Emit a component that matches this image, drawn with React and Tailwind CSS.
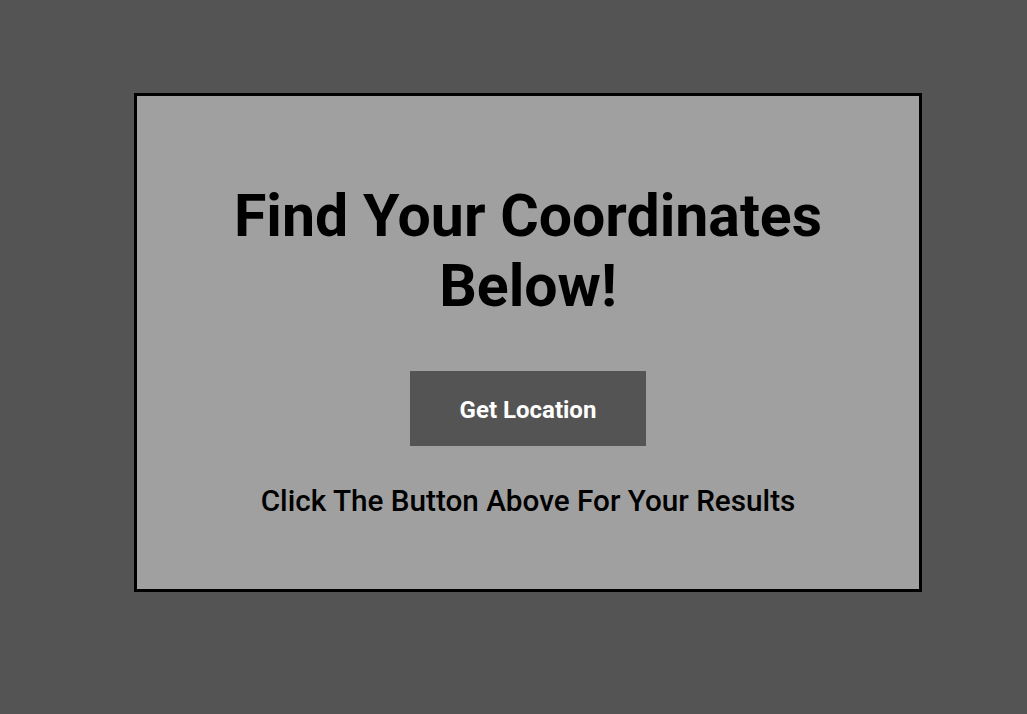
export default function App() {
  return (
    <div className="min-h-[714px] w-full bg-[#545454] pt-[93px] pl-[134px]" style={{ fontFamily: 'Roboto, "Liberation Sans", Arial, sans-serif' }}>
      <div className="w-[788px] h-[499px] border-[3px] border-black bg-[#a0a0a0] flex flex-col items-center pt-[85px]">
        <h1 className="text-[59px] leading-[70px] font-bold text-black text-center w-[640px]">
          Find Your Coordinates Below!
        </h1>
        <button className="mt-[50px] w-[236px] h-[75px] bg-[#545454] text-white font-bold text-[24px] pt-[3px]">
          Get Location
        </button>
        <p className="mt-[37px] text-[29.7px] leading-[36px] font-medium text-black">
          Click The Button Above For Your Results
        </p>
      </div>
    </div>
  );
}
